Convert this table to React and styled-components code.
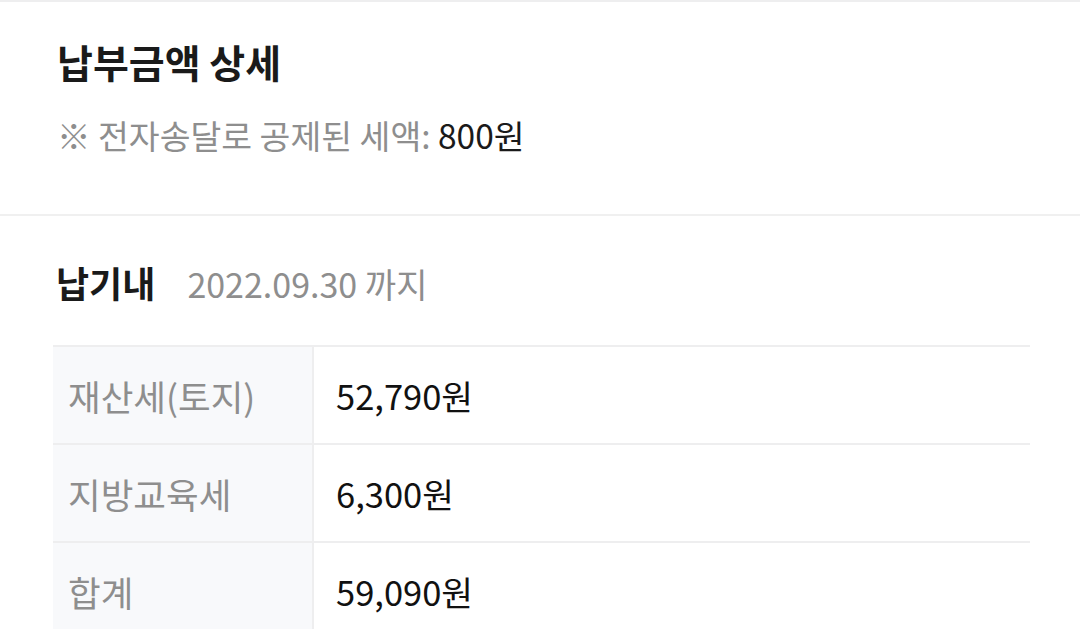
import React from "react";
import styled, { createGlobalStyle } from "styled-components";

const GlobalStyle = createGlobalStyle`
  body {
    margin: 0;
    background: #ffffff;
    font-family: "Noto Sans CJK KR", "Noto Sans", sans-serif;
    color: #1a1a1a;
  }
`;

const Page = styled.div`
  border-top: 2px solid #eeeeef;
`;

const Summary = styled.section`
  padding: 33px 57px 57px;
  border-bottom: 2px solid #f0f0f0;
`;

const Title = styled.h2`
  margin: 0;
  font-size: ${({ $size }) => $size}px;
  line-height: 52px;
  font-weight: 700;
  color: #1a1a1a;
`;

const Note = styled.p`
  margin: 26px 0 0;
  font-size: 33.5px;
  line-height: 44px;
  color: #8e8e8e;

  strong {
    font-weight: 400;
    color: #1a1a1a;
  }
`;

const Due = styled.section`
  padding: 40px 50px 0 53px;
`;

const DueHead = styled.div`
  display: flex;
  align-items: baseline;
  gap: 32px;
  padding-left: 3px;
`;

const DueDate = styled.span`
  font-size: 34px;
  line-height: 52px;
  color: #8e8e8e;
`;

const Table = styled.div`
  margin-top: 35px;
  display: grid;
  grid-template-columns: 261px 1fr;
  border-top: 2px solid #eeeeef;
`;

const Label = styled.div`
  height: 96px;
  display: flex;
  align-items: center;
  padding-left: 15px;
  background: #f8f9fb;
  border-right: 2px solid #eeeeef;
  border-bottom: 2px solid #eeeeef;
  font-size: 35.5px;
  color: #8e8e8e;
`;

const Value = styled.div`
  height: 96px;
  display: flex;
  align-items: center;
  padding-left: 22px;
  border-bottom: 2px solid #eeeeef;
  font-size: 34.5px;
  color: #111111;
`;

const rows = [
  { label: "재산세(토지)", value: "52,790원" },
  { label: "지방교육세", value: "6,300원" },
  { label: "합계", value: "59,090원" },
];

export default function App() {
  return (
    <Page>
      <GlobalStyle />
      <Summary>
        <Title $size={39}>납부금액 상세</Title>
        <Note>
          ※ 전자송달로 공제된 세액: <strong>800원</strong>
        </Note>
      </Summary>
      <Due>
        <DueHead>
          <Title as="h3" $size={36}>
            납기내
          </Title>
          <DueDate>2022.09.30 까지</DueDate>
        </DueHead>
        <Table>
          {rows.map((row) => (
            <React.Fragment key={row.label}>
              <Label>{row.label}</Label>
              <Value>{row.value}</Value>
            </React.Fragment>
          ))}
        </Table>
      </Due>
    </Page>
  );
}
